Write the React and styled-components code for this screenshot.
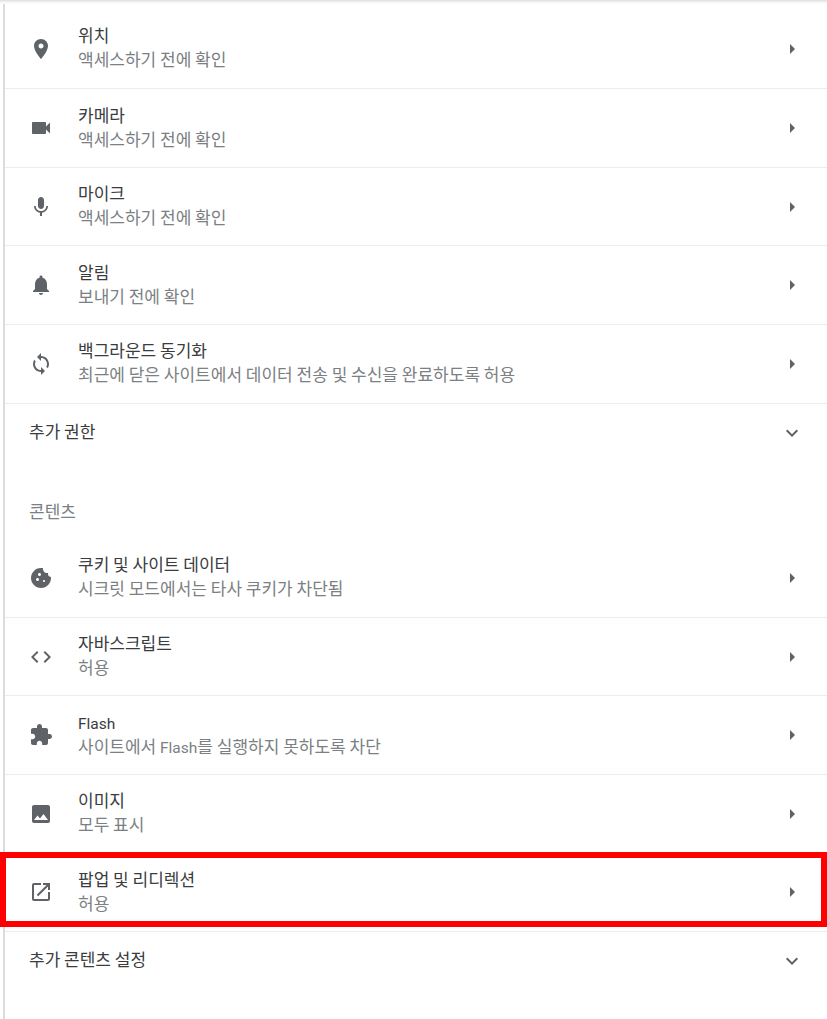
import React from 'react';
import styled, { createGlobalStyle } from 'styled-components';

const Global = createGlobalStyle`
  html, body { margin: 0; padding: 0; background: #fff; }
  body { font-family: "Noto Sans CJK KR", Roboto, sans-serif; }
`;

const Page = styled.div`
  height: 1019px;
  overflow: hidden;
  position: relative;
  background: #fff;
`;

const TopShade = styled.div`
  height: 4px;
  background: linear-gradient(#dedede, #f6f6f6 60%, #fff);
`;

const Panel = styled.div`
  margin-left: 3px;
  padding-top: 5.7px;
  border-left: 2px solid #dcdcdc;
  height: 1009px;
`;

const Row = styled.div`
  height: 78.6px;
  box-sizing: border-box;
  display: flex;
  align-items: center;
  position: relative;
  border-top: ${props => (props.$first ? 'none' : '1px solid #ececec')};
`;

const IconSlot = styled.div`
  width: 24px;
  height: 24px;
  margin-left: 24px;
  margin-right: 25px;
  flex: none;
`;

const Text = styled.div`
  flex: 1;
  display: flex;
  flex-direction: column;
  gap: 3px;
  margin-bottom: 4px;
`;

const Title = styled.div`
  height: 21px;
  font-size: 17px;
  line-height: 21px;
  color: #3a3c40;
`;

const Sub = styled.div`
  height: 21px;
  font-size: 17px;
  line-height: 21px;
  color: #7c7f83;
`;

const Latin = styled.span`
  font-family: Roboto, sans-serif;
  font-size: 15.5px;
`;

const Arrow = styled.div`
  width: 24px;
  height: 24px;
  margin-right: 23px;
  flex: none;
`;

const Svg = styled.svg`
  display: block;
  width: 24px;
  height: 24px;
  fill: #5f6368;
`;

const ExpandRow = styled.div`
  height: 56px;
  box-sizing: border-box;
  display: flex;
  align-items: center;
  padding: 3px 0 0 24px;
  border-top: 1px solid #ececec;
`;

const ExpandLabel = styled.div`
  flex: 1;
  padding-bottom: 5px;
  font-size: 17px;
  line-height: 21px;
  color: #3a3c40;
`;

const SectionTitle = styled.div`
  padding: 41px 0 17.6px 24px;
  font-size: 17px;
  line-height: 21px;
  color: #7c7f83;
`;

const Highlight = styled.div`
  position: absolute;
  left: -5px;
  right: 0;
  top: -2px;
  height: 75px;
  border: 6px solid #fe0000;
  box-sizing: border-box;
  pointer-events: none;
`;

const paths = {
  location: 'M12 2C8.13 2 5 5.13 5 9c0 5.25 7 13 7 13s7-7.75 7-13c0-3.87-3.13-7-7-7zm0 9.5c-1.38 0-2.5-1.12-2.5-2.5s1.12-2.5 2.5-2.5 2.5 1.12 2.5 2.5-1.12 2.5-2.5 2.5z',
  camera: 'M17 10.5V7c0-.55-.45-1-1-1H4c-.55 0-1 .45-1 1v10c0 .55.45 1 1 1h12c.55 0 1-.45 1-1v-3.5l4 4v-11l-4 4z',
  mic: 'M12 14c1.66 0 2.99-1.34 2.99-3L15 5c0-1.66-1.34-3-3-3S9 3.34 9 5v6c0 1.66 1.34 3 3 3zm5.3-3c0 3-2.54 5.1-5.3 5.1S6.7 14 6.7 11H5c0 3.41 2.72 6.23 6 6.72V21h2v-3.28c3.28-.48 6-3.3 6-6.72h-1.7z',
  bell: 'M12 22c1.1 0 2-.9 2-2h-4c0 1.1.89 2 2 2zm6-6v-5c0-3.07-1.64-5.64-4.5-6.32V4c0-.83-.67-1.5-1.5-1.5s-1.5.67-1.5 1.5v.68C7.63 5.36 6 7.92 6 11v5l-2 2v1h16v-1l-2-2z',
  sync: 'M12 4V1L8 5l4 4V6c3.31 0 6 2.69 6 6 0 1.01-.25 1.97-.7 2.8l1.46 1.46C19.54 15.03 20 13.57 20 12c0-4.42-3.58-8-8-8zm0 14c-3.31 0-6-2.69-6-6 0-1.01.25-1.97.7-2.8L5.24 7.74C4.46 8.97 4 10.43 4 12c0 4.42 3.58 8 8 8v3l4-4-4-4v3z',
  cookie: 'M21.95 10.99c-1.79-.03-3.7-1.95-2.68-4.22-2.97 1-5.78-1.59-5.19-4.56C7.11.74 2 6.41 2 12c0 5.52 4.48 10 10 10 5.89 0 10.54-5.08 9.95-11.01zM8.5 15c-.83 0-1.5-.67-1.5-1.5S7.67 12 8.5 12s1.5.67 1.5 1.5S9.33 15 8.5 15zm2-5C9.67 10 9 9.33 9 8.5S9.67 7 10.5 7s1.5.67 1.5 1.5-.67 1.5-1.5 1.5zm4.5 6c-.55 0-1-.45-1-1s.45-1 1-1 1 .45 1 1-.45 1-1 1z',
  code: 'M9.4 16.6L4.8 12l4.6-4.6L8 6l-6 6 6 6 1.4-1.4zm5.2 0l4.6-4.6-4.6-4.6L16 6l6 6-6 6-1.4-1.4z',
  puzzle: 'M20.5 11H19V7c0-1.1-.9-2-2-2h-4V3.5C13 2.12 11.88 1 10.5 1S8 2.12 8 3.5V5H4c-1.1 0-1.99.9-1.99 2v3.8H3.5c1.49 0 2.7 1.21 2.7 2.7s-1.21 2.7-2.7 2.7H2V20c0 1.1.9 2 2 2h3.8v-1.5c0-1.49 1.21-2.7 2.7-2.7 1.49 0 2.7 1.21 2.7 2.7V22H17c1.1 0 2-.9 2-2v-4h1.5c1.38 0 2.5-1.12 2.5-2.5S21.88 11 20.5 11z',
  image: 'M21 19V5c0-1.1-.9-2-2-2H5c-1.1 0-2 .9-2 2v14c0 1.1.9 2 2 2h14c1.1 0 2-.9 2-2zM8.5 13.5l2.5 3.01L14.5 12l4.5 6H5l3.5-4.5z',
  popup: 'M19 19H5V5h7V3H5c-1.11 0-2 .9-2 2v14c0 1.1.89 2 2 2h14c1.1 0 2-.9 2-2v-7h-2v7zM14 3v2h3.59l-9.83 9.83 1.41 1.41L19 6.41V10h2V3h-7z',
  arrowRight: 'M10 7l5 5-5 5z',
  expand: 'M16.59 8.59L12 13.17 7.41 8.59 6 10l6 6 6-6z',
};

const Icon = ({ name }) => (
  <Svg viewBox="0 0 24 24"><path d={paths[name]} /></Svg>
);

const SettingRow = ({ icon, title, sub, first, marked }) => (
  <Row $first={first}>
    <IconSlot><Icon name={icon} /></IconSlot>
    <Text>
      <Title>{title}</Title>
      <Sub>{sub}</Sub>
    </Text>
    <Arrow><Icon name="arrowRight" /></Arrow>
    {marked && <Highlight />}
  </Row>
);

const permissions = [
  { icon: 'location', title: '위치', sub: '액세스하기 전에 확인' },
  { icon: 'camera', title: '카메라', sub: '액세스하기 전에 확인' },
  { icon: 'mic', title: '마이크', sub: '액세스하기 전에 확인' },
  { icon: 'bell', title: '알림', sub: '보내기 전에 확인' },
  { icon: 'sync', title: '백그라운드 동기화', sub: '최근에 닫은 사이트에서 데이터 전송 및 수신을 완료하도록 허용' },
];

const content = [
  { icon: 'cookie', title: '쿠키 및 사이트 데이터', sub: '시크릿 모드에서는 타사 쿠키가 차단됨' },
  { icon: 'code', title: '자바스크립트', sub: '허용' },
  { icon: 'puzzle', title: <Latin>Flash</Latin>, sub: <>사이트에서 <Latin>Flash</Latin>를 실행하지 못하도록 차단</> },
  { icon: 'image', title: '이미지', sub: '모두 표시' },
  { icon: 'popup', title: '팝업 및 리디렉션', sub: '허용', marked: true },
];

const App = () => (
  <Page>
    <Global />
    <TopShade />
    <Panel>
      {permissions.map((p, i) => <SettingRow key={p.icon} first={i === 0} {...p} />)}
      <ExpandRow>
        <ExpandLabel>추가 권한</ExpandLabel>
        <Arrow><Icon name="expand" /></Arrow>
      </ExpandRow>
      <SectionTitle>콘텐츠</SectionTitle>
      {content.map((p, i) => <SettingRow key={p.icon} first={i === 0} {...p} />)}
      <ExpandRow>
        <ExpandLabel>추가 콘텐츠 설정</ExpandLabel>
        <Arrow><Icon name="expand" /></Arrow>
      </ExpandRow>
    </Panel>
  </Page>
);

export default App;
